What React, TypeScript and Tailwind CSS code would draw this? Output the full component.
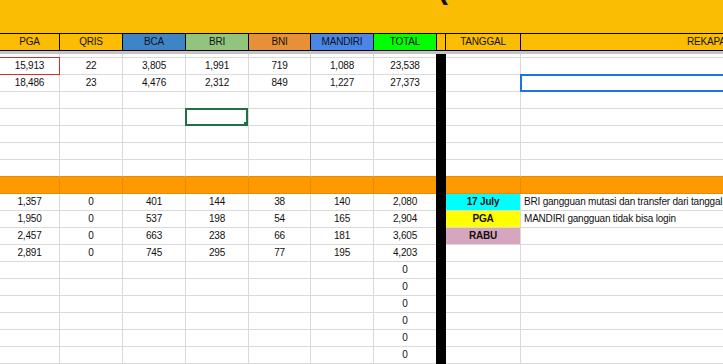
import React from "react";

type Row = {
  vals: string[];
  tanggal?: { text: string; bg: string };
  rekap?: string;
  orange?: boolean;
  preOrange?: boolean;
  redFirst?: boolean;
  greenBri?: boolean;
  blueRekap?: boolean;
};

const empty = ["", "", "", "", "", "", ""];

const rows: Row[] = [
  { vals: ["15,913", "22", "3,805", "1,991", "719", "1,088", "23,538"], redFirst: true },
  { vals: ["18,486", "23", "4,476", "2,312", "849", "1,227", "27,373"], blueRekap: true },
  { vals: empty },
  { vals: empty, greenBri: true },
  { vals: empty },
  { vals: empty },
  { vals: empty, preOrange: true },
  { vals: empty, orange: true },
  {
    vals: ["1,357", "0", "401", "144", "38", "140", "2,080"],
    tanggal: { text: "17 July", bg: "bg-[#00ffff]" },
    rekap: "BRI gangguan mutasi dan transfer dari tanggal 17 July",
  },
  {
    vals: ["1,950", "0", "537", "198", "54", "165", "2,904"],
    tanggal: { text: "PGA", bg: "bg-[#ffff00]" },
    rekap: "MANDIRI gangguan tidak bisa login",
  },
  {
    vals: ["2,457", "0", "663", "238", "66", "181", "3,605"],
    tanggal: { text: "RABU", bg: "bg-[#d5a6bd]" },
  },
  { vals: ["2,891", "0", "745", "295", "77", "195", "4,203"] },
  { vals: ["", "", "", "", "", "", "0"] },
  { vals: ["", "", "", "", "", "", "0"] },
  { vals: ["", "", "", "", "", "", "0"] },
  { vals: ["", "", "", "", "", "", "0"] },
  { vals: ["", "", "", "", "", "", "0"] },
  { vals: ["", "", "", "", "", "", "0"] },
];

const gridCols =
  "grid grid-cols-[60px_63px_63px_63px_62px_63px_62px_10px_75px_1fr]";

const headers: { label: string; bg: string }[] = [
  { label: "PGA", bg: "bg-[#fbbc04]" },
  { label: "QRIS", bg: "bg-[#fbbc04]" },
  { label: "BCA", bg: "bg-[#3d85c6]" },
  { label: "BRI", bg: "bg-[#93c47d]" },
  { label: "BNI", bg: "bg-[#e69138]" },
  { label: "MANDIRI", bg: "bg-[#4a86e8]" },
  { label: "TOTAL", bg: "bg-[#00ff00]" },
];

function DataRow({ row }: { row: Row }) {
  const bg = row.orange ? "bg-[#ff9900]" : "bg-white";
  const bc = row.orange || row.preOrange ? "border-[#e38b0c]" : "border-[#dadada]";
  const vbc = row.orange ? "border-r-[#e38b0c]" : "border-r-[#dadada]";
  return (
    <div className={`${gridCols} h-[17px]`}>
      {row.vals.map((v, i) => (
        <div
          key={i}
          className={`relative flex items-center justify-center border-b ${bc} ${bg} ${
            i < 6 ? `border-r ${vbc}` : ""
          }`}
        >
          <span className="leading-none">{v}</span>
          {i === 0 && row.redFirst && (
            <div className="absolute -inset-px border border-[#d0312d]" />
          )}
          {i === 3 && row.greenBri && (
            <div className="absolute -left-px right-0 -top-px -bottom-px border-2 border-[#1e7145]">
              <div className="absolute -right-[2px] -bottom-[2px] w-[4px] h-[4px] bg-[#1e7145]" />
            </div>
          )}
        </div>
      ))}
      <div className="bg-black" />
      <div
        className={`flex items-center justify-center border-b border-r ${bc} ${vbc} ${
          row.tanggal ? row.tanggal.bg : bg
        } font-bold`}
      >
        <span className="leading-none">{row.tanggal?.text}</span>
      </div>
      <div className={`relative flex items-center border-b ${bc} ${bg} pl-[3px] overflow-visible whitespace-nowrap`}>
        <span className="leading-none">{row.rekap}</span>
        {row.blueRekap && (
          <div className="absolute -left-px -right-[4px] -top-px -bottom-px border-2 border-[#1a73e8]" />
        )}
      </div>
    </div>
  );
}

export default function App() {
  return (
    <div className="w-[723px] h-[364px] overflow-hidden bg-white text-[#111] text-[10px] tracking-[-0.2px] font-['Liberation_Sans',Arial,sans-serif]">
      <div className="relative h-[33px] bg-[#fbbc04] overflow-hidden">
        <span className="absolute left-[438px] -top-[26px] text-[30px] font-bold leading-none">
          (
        </span>
      </div>
      <div className={`${gridCols} h-[18px] border-t border-b border-black`}>
        {headers.map((h, i) => (
          <div
            key={h.label}
            className={`flex items-center justify-center ${h.bg} ${i < 6 ? "border-r border-black" : ""}`}
          >
            <span className="leading-none">{h.label}</span>
          </div>
        ))}
        <div className="bg-[#fbbc04] border-l border-r border-black" />
        <div className="flex items-center justify-center bg-[#fbbc04] border-r border-black">
          <span className="leading-none">TANGGAL</span>
        </div>
        <div className="flex items-center bg-[#fbbc04] pl-[166px] whitespace-nowrap overflow-hidden">
          <span className="leading-none">REKAPAN HARIAN</span>
        </div>
      </div>
      <div className="h-[3px] bg-[#c4c4c4]" />
      <div className={`${gridCols} h-[4px]`}>
        {[0, 1, 2, 3, 4, 5, 6].map((i) => (
          <div
            key={i}
            className={`border-b border-[#dadada] ${i < 6 ? "border-r" : ""}`}
          />
        ))}
        <div className="bg-black" />
        <div className="border-b border-r border-[#dadada]" />
        <div className="border-b border-[#dadada]" />
      </div>
      {rows.map((r, i) => (
        <DataRow key={i} row={r} />
      ))}
    </div>
  );
}
